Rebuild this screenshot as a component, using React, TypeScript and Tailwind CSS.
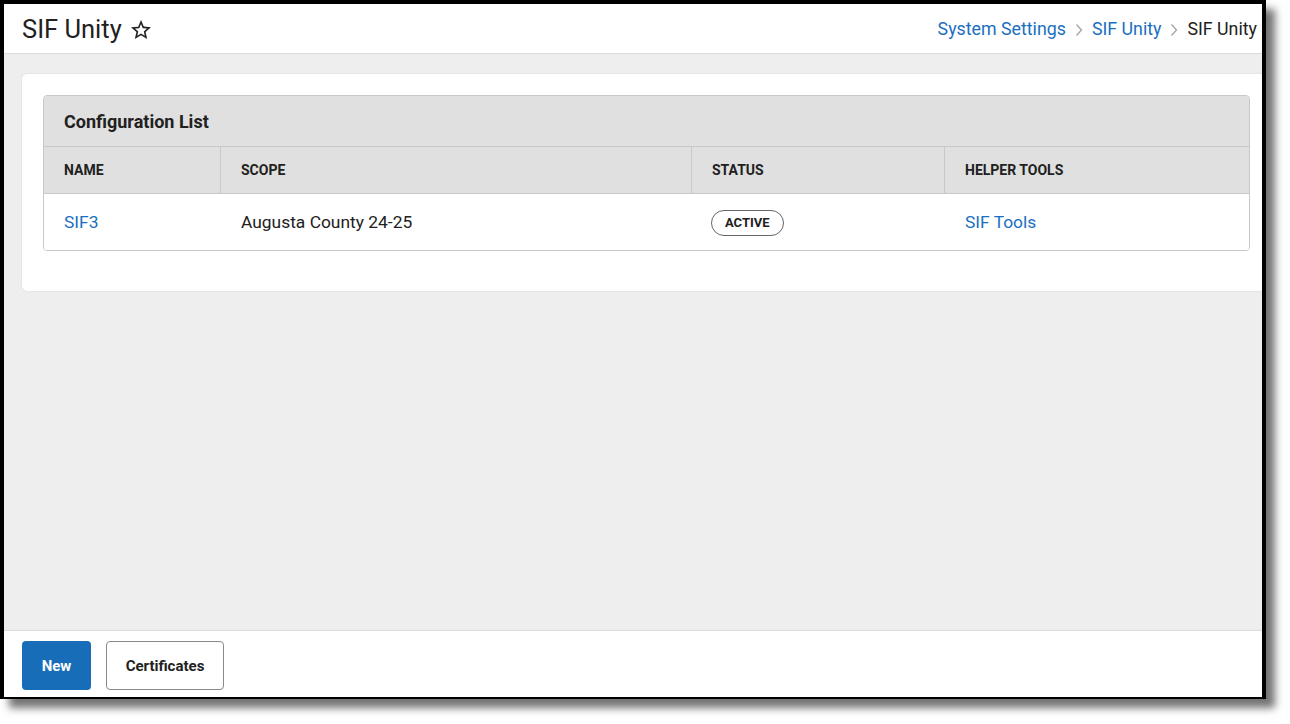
import React from "react";

const COLS = [
  { key: "name", label: "NAME", w: "w-[176px]" },
  { key: "scope", label: "SCOPE", w: "w-[471px]" },
  { key: "status", label: "STATUS", w: "w-[253px]" },
  { key: "helper", label: "HELPER TOOLS", w: "flex-1" },
];

function StarOutline() {
  return (
    <svg viewBox="0 0 24 24" className="h-[24px] w-[24px]" fill="#212121">
      <path d="M22 9.24l-7.19-.62L12 2 9.19 8.63 2 9.24l5.46 4.73L5.82 21 12 17.27 18.18 21l-1.63-7.03L22 9.24zM12 15.4l-3.76 2.27 1-4.28-3.32-2.88 4.38-.38L12 6.1l1.71 4.04 4.38.38-3.32 2.88 1 4.28L12 15.4z" />
    </svg>
  );
}

function Chevron() {
  return (
    <svg viewBox="0 0 8 14" className="mx-[9px] h-[14px] w-[8px]" fill="none" stroke="#a8a8a8" strokeWidth="1.4">
      <path d="M1.5 1.5l5 5.5-5 5.5" />
    </svg>
  );
}

export default function App() {
  return (
    <div className="h-[724px] w-[1290px] bg-white font-['Roboto',sans-serif] text-[#212121]">
      <div className="h-[699px] w-[1266px] bg-black pb-[2px] pl-[4px] pr-[4px] pt-[4px] shadow-[9px_9px_8px_rgba(0,0,0,0.55)]">
        <div className="flex h-full w-full flex-col overflow-hidden bg-[#eeeeee]">
          {/* header */}
          <div className="flex h-[50px] shrink-0 items-center justify-between border-b border-[#dcdcdc] bg-white pl-[18px] pr-[5px] pt-[2px]">
            <div className="flex items-center">
              <h1 className="text-[25.5px] leading-none">SIF Unity</h1>
              <span className="ml-[7px] flex items-center">
                <StarOutline />
              </span>
            </div>
            <nav className="flex items-center text-[17.8px]">
              <a className="text-[#1a6fc0]">System Settings</a>
              <Chevron />
              <a className="text-[#1a6fc0]">SIF Unity</a>
              <Chevron />
              <span>SIF Unity</span>
            </nav>
          </div>

          {/* content */}
          <div className="flex-1 pl-[18px] pt-[20px]">
            <div className="w-[1249px] rounded-[5px] bg-white px-[21px] pb-[40px] pt-[21px] shadow-[0_0_2px_rgba(0,0,0,0.12)]">
              <div className="overflow-hidden rounded-[4px] border border-[#c8c8c8]">
                <div className="flex h-[51px] items-center border-b border-[#c8c8c8] bg-[#e0e0e0] px-[20px] text-[18px] font-bold">
                  Configuration List
                </div>
                <div className="flex h-[47px] border-b border-[#c8c8c8] bg-[#e0e0e0] text-[14px] font-bold">
                  {COLS.map((c, i) => (
                    <div
                      key={c.key}
                      className={`${c.w} flex items-center px-[20px] pt-[1px] ${i > 0 ? "border-l border-[#c8c8c8]" : ""}`}
                    >
                      {c.label}
                    </div>
                  ))}
                </div>
                <div className="flex h-[56px] items-center bg-white text-[17.4px]">
                  <div className="w-[176px] px-[20px] text-[#1a6fc0]">SIF3</div>
                  <div className="w-[471px] px-[21px]">Augusta County 24-25</div>
                  <div className="w-[253px] px-[20px]">
                    <span className="inline-flex h-[26px] items-center rounded-full border border-[#666] px-[13px] text-[13px] font-bold">
                      ACTIVE
                    </span>
                  </div>
                  <div className="flex-1 px-[21px] text-[#1a6fc0]">SIF Tools</div>
                </div>
              </div>
            </div>
          </div>

          {/* footer */}
          <div className="flex h-[67px] shrink-0 gap-[15px] border-t border-[#dcdcdc] bg-white pl-[18px] pt-[10px]">
            <button className="h-[49px] w-[69px] rounded-[4px] bg-[#176db8] pt-[1px] text-[15px] font-bold text-white">
              New
            </button>
            <button className="h-[49px] w-[118px] rounded-[4px] border border-[#8a8a8a] bg-white pt-[1px] text-[15px] font-bold text-[#212121]">
              Certificates
            </button>
          </div>
        </div>
      </div>
    </div>
  );
}
